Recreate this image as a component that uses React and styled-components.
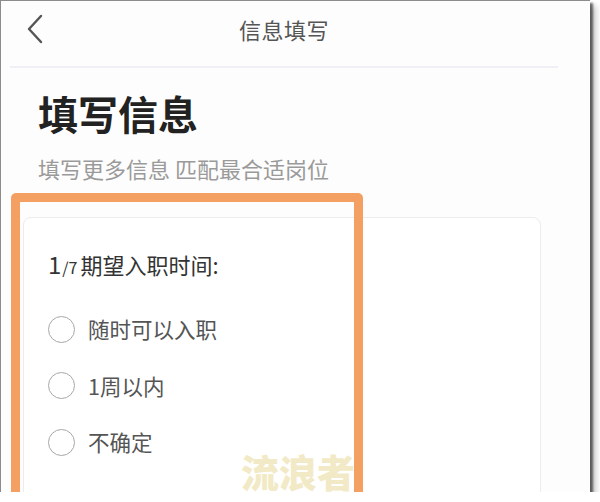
import React from "react";
import styled, { createGlobalStyle } from "styled-components";

const Global = createGlobalStyle`
  html, body { margin: 0; padding: 0; background: #ffffff; }
  body { font-family: "Noto Sans CJK SC", "Noto Sans", sans-serif; }
`;

const Frame = styled.div`
  position: relative;
  box-sizing: border-box;
  width: 590px;
  height: 492px;
  overflow: hidden;
  background: #fdfdfd;
  border-left: 1px solid #8c8c8c;
  border-top: 1px solid #8c8c8c;
  box-shadow: 3px 3px 2px rgba(0, 0, 0, 0.55), 6px 6px 6px rgba(0, 0, 0, 0.22);
`;

const Nav = styled.div`
  box-sizing: border-box;
  height: 67px;
  margin: 0 32px 0 9px;
  padding-top: 13px;
  border-bottom: 2px solid #eef0f5;
  display: grid;
  grid-template-columns: 1fr auto 1fr;
  align-items: start;
`;

const Back = styled.div`
  padding-left: 16px;
  height: 30px;
  display: flex;
  align-items: center;
`;

const NavTitle = styled.div`
  font-size: 22px;
  line-height: 30px;
  color: #555;
  letter-spacing: 0.5px;
`;

const Header = styled.div`
  padding-left: 37px;
`;

const Heading = styled.h1`
  margin: 21px 0 0;
  font-size: 40px;
  line-height: 48px;
  font-weight: 700;
  color: #222;
`;

const Sub = styled.div`
  margin-top: 17px;
  font-size: 22px;
  line-height: 28px;
  color: #9a9a9a;
`;

const Card = styled.div`
  box-sizing: border-box;
  margin: 35px 0 0 22px;
  width: 518px;
  height: 320px;
  border: 1.5px solid #ececec;
  border-radius: 8px;
  background: #fff;
  padding: 31px 0 0 24px;
`;

const Question = styled.div`
  display: flex;
  align-items: baseline;
  font-size: 22px;
  line-height: 30px;
  color: #333;
`;

const Num = styled.span`
  font-size: 24px;
  margin-right: 1px;
`;

const Total = styled.span`
  font-size: 16px;
  margin-right: 3px;
`;

const Options = styled.div`
  margin-top: 19px;
  display: flex;
  flex-direction: column;
`;

const Option = styled.div`
  height: 56.5px;
  display: flex;
  align-items: center;
  gap: 13px;
`;

const Radio = styled.span`
  box-sizing: border-box;
  width: 27px;
  height: 27px;
  border-radius: 50%;
  border: 1.5px solid #a8a8a8;
`;

const Label = styled.span`
  font-size: 21.5px;
  line-height: 30px;
  color: #555;
`;

const Highlight = styled.div`
  position: absolute;
  left: 10px;
  top: 192px;
  width: 352px;
  height: 340px;
  box-sizing: border-box;
  border: 9px solid #f4a063;
  border-radius: 5px;
  pointer-events: none;
`;

const Watermark = styled.div`
  position: absolute;
  left: 240px;
  top: 450px;
  font-size: 38px;
  line-height: 40px;
  font-weight: 900;
  color: #f2eac6;
`;

export default function App() {
  return (
    <>
      <Global />
      <Frame>
        <Nav>
          <Back>
            <svg width="18" height="30" viewBox="0 0 18 30">
              <path d="M15 2 L3 15 L15 28" fill="none" stroke="#555" strokeWidth="2.4" strokeLinecap="round" strokeLinejoin="round" />
            </svg>
          </Back>
          <NavTitle>信息填写</NavTitle>
          <div />
        </Nav>
        <Header>
          <Heading>填写信息</Heading>
          <Sub>填写更多信息 匹配最合适岗位</Sub>
        </Header>
        <Card>
          <Question>
            <Num>1</Num>
            <Total>/7</Total>
            期望入职时间:
          </Question>
          <Options>
            {["随时可以入职", "1周以内", "不确定"].map((t) => (
              <Option key={t}>
                <Radio />
                <Label>{t}</Label>
              </Option>
            ))}
          </Options>
        </Card>
        <Highlight />
        <Watermark>流浪者</Watermark>
      </Frame>
    </>
  );
}
